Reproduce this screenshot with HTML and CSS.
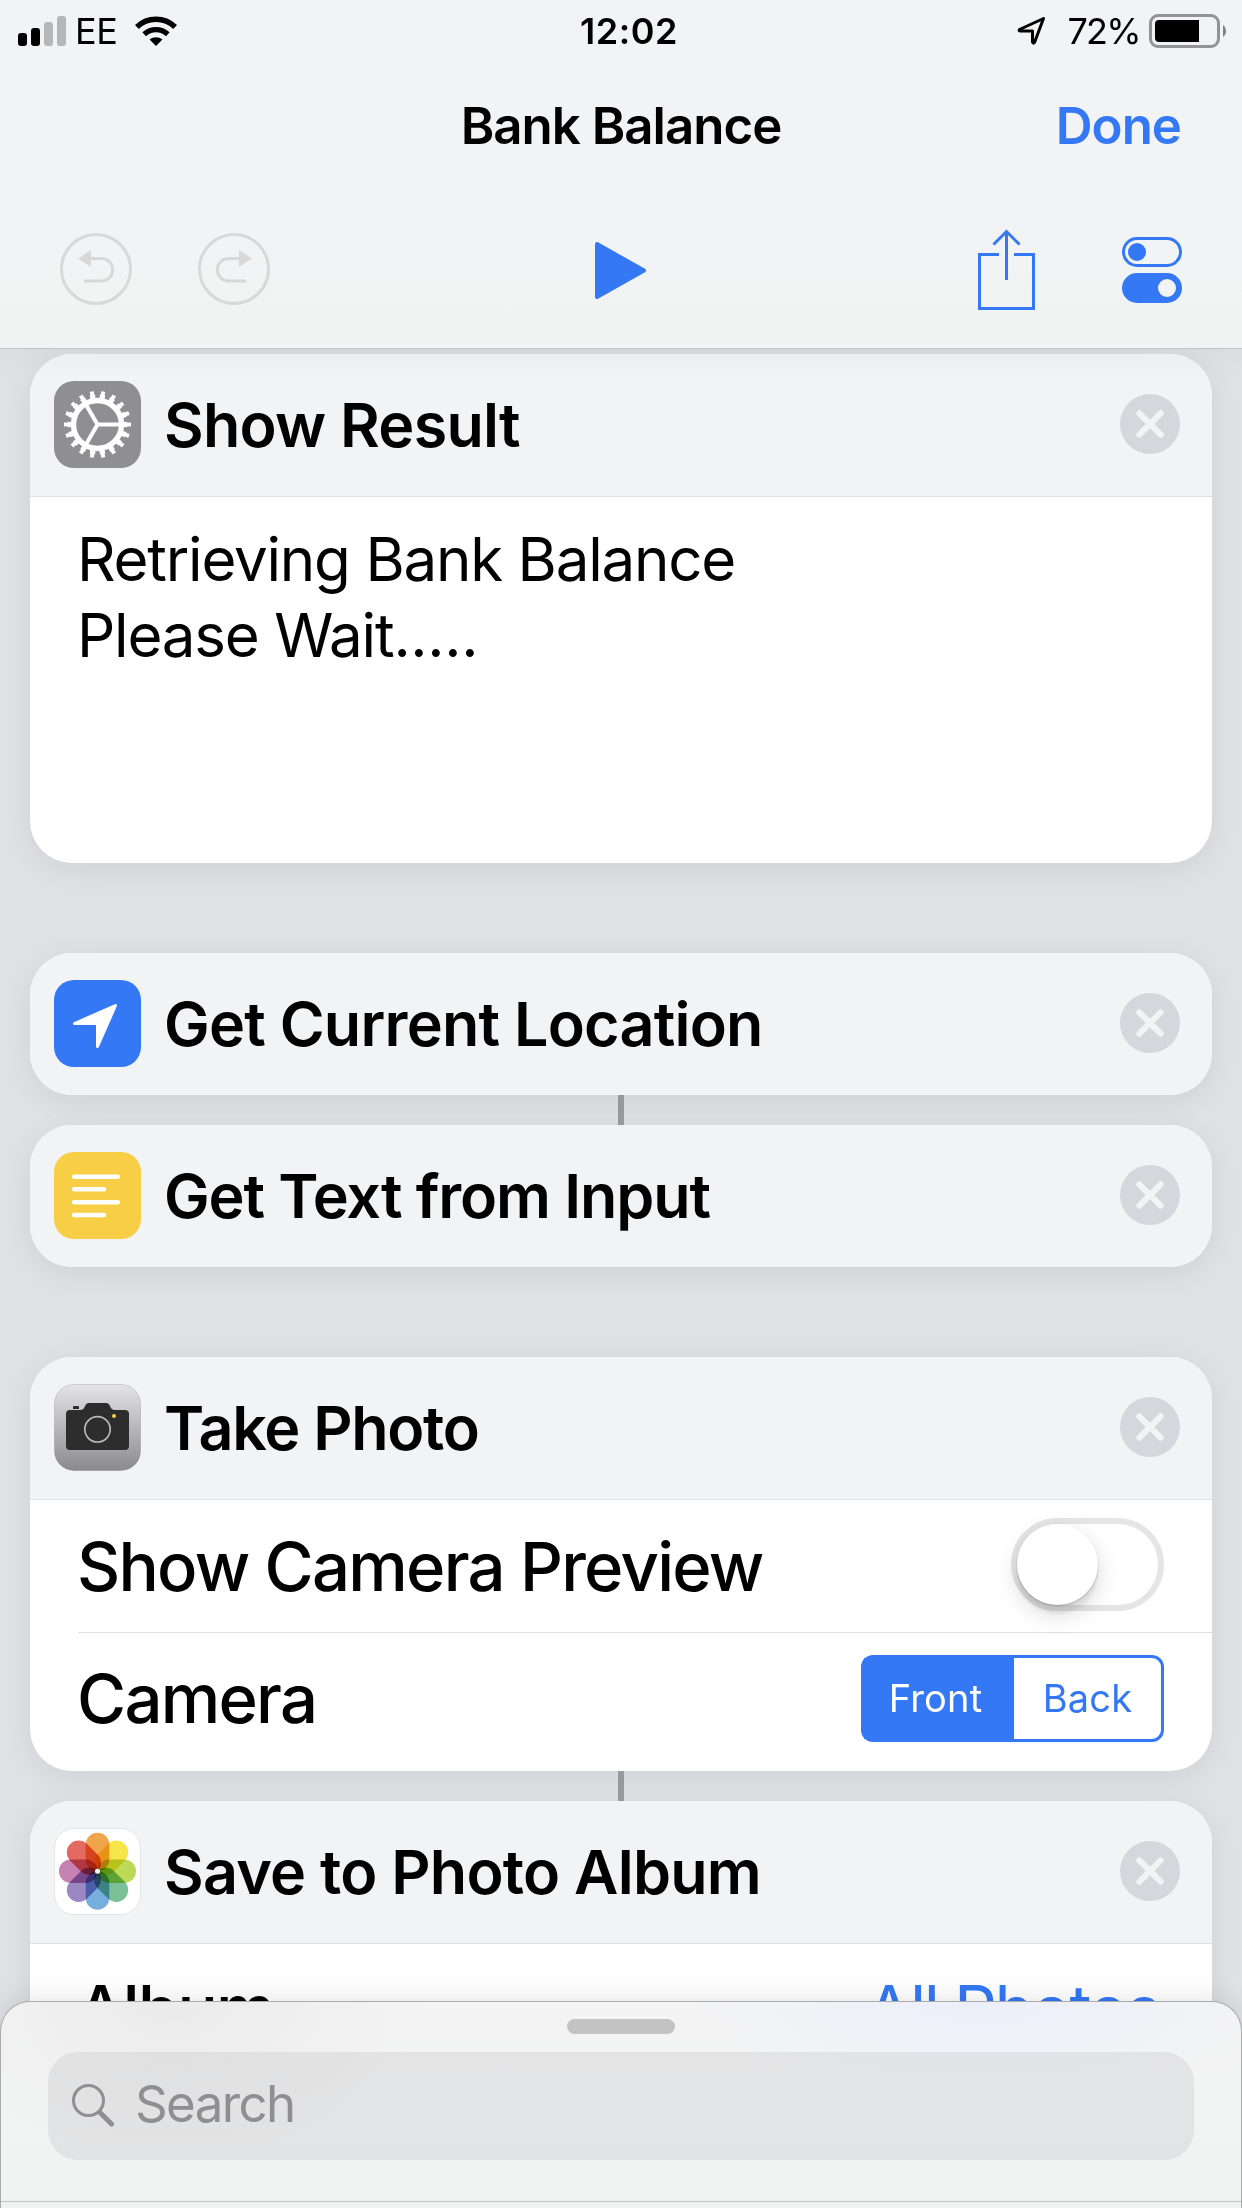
FILE: index.html
```
<!DOCTYPE html>
<html lang="en">
<head>
    <meta charset="UTF-8">
    <meta name="viewport" content="width=device-width, initial-scale=1.0">
    <title>Bank Balance</title>
    <link rel="stylesheet" href="styles.css">
</head>
<body>
    <header class="navbar">
        <div class="status-bar">
            <div class="status-left">
                <svg class="signal" width="48" height="30" viewBox="0 0 48 30">
                    <rect x="0" y="17" width="9" height="13" rx="3"/>
                    <rect x="13" y="12" width="9" height="18" rx="3"/>
                    <rect x="26" y="6" width="9" height="24" rx="3" fill="#b5b6b8"/>
                    <rect x="39" y="0" width="9" height="30" rx="3" fill="#b5b6b8"/>
                </svg>
                <span class="carrier">EE</span>
                <svg class="wifi" width="42" height="30" viewBox="0 0 42 30">
                    <path d="M21 30l-6.4-6.4a9.8 9.8 0 0 1 12.8 0z"/>
                    <path d="M9.2 18.2a17.5 17.5 0 0 1 23.6 0" fill="none" stroke="#000" stroke-width="5.4"/>
                    <path d="M1.9 11a27.5 27.5 0 0 1 38.2 0" fill="none" stroke="#000" stroke-width="5.4"/>
                </svg>
            </div>
            <span class="time">12:02</span>
            <div class="status-right">
                <svg class="arrow" width="30" height="30" viewBox="0 0 30 30">
                    <path d="M26.5 2.5L2.5 13.5Q1.5 15 3 15H15.5V26Q16 28 17.5 26.5Z" fill="none" stroke="#000" stroke-width="3" stroke-linejoin="round"/>
                </svg>
                <span class="percent">72%</span>
                <svg class="battery" width="78" height="34" viewBox="0 0 78 34">
                    <rect x="1.5" y="1.5" width="68" height="31" rx="7.5" fill="none" stroke="#929395" stroke-width="3"/>
                    <path d="M10 6h40v22H10a4 4 0 0 1-4-4V10a4 4 0 0 1 4-4z"/>
                    <path d="M74 11a7.5 7.5 0 0 1 0 12z" fill="#808183"/>
                </svg>
            </div>
        </div>
        <div class="title-bar">
            <h1 class="title">Bank Balance</h1>
            <a class="done">Done</a>
        </div>
        <div class="toolbar">
            <div class="history">
                <svg width="72" height="72" viewBox="0 0 72 72">
                    <circle cx="36" cy="36" r="34.5" fill="none" stroke="#d8d8d8" stroke-width="3"/>
                    <path d="M18 25.5L31 17v17z" fill="#d8d8d8"/>
                    <path d="M30 25.5h11.5a11.25 11.25 0 0 1 0 22.5H24" fill="none" stroke="#d8d8d8" stroke-width="3"/>
                </svg>
                <svg width="72" height="72" viewBox="0 0 72 72">
                    <circle cx="36" cy="36" r="34.5" fill="none" stroke="#d8d8d8" stroke-width="3"/>
                    <path d="M54 25.5L41 17v17z" fill="#d8d8d8"/>
                    <path d="M42 25.5H30.5a11.25 11.25 0 0 0 0 22.5H48" fill="none" stroke="#d8d8d8" stroke-width="3"/>
                </svg>
            </div>
            <svg class="play" width="51" height="57" viewBox="0 0 51 57">
                <path d="M2 2L49 28.5L2 55z" fill="#3478f6" stroke="#3478f6" stroke-width="4" stroke-linejoin="round"/>
            </svg>
            <div class="tools">
                <svg class="share" width="57" height="81" viewBox="0 0 57 81">
                    <path d="M21 25.5H1.5v54h54v-54H36M28.5 51V2M15.5 15.5l13-13 13 13" fill="none" stroke="#3478f6" stroke-width="3"/>
                </svg>
                <svg width="60" height="66" viewBox="0 0 60 66">
                    <rect x="1.5" y="1.5" width="57" height="27" rx="13.5" fill="none" stroke="#3478f6" stroke-width="3"/>
                    <circle cx="15" cy="15" r="9" fill="#3478f6"/>
                    <rect y="36" width="60" height="30" rx="15" fill="#3478f6"/>
                    <circle cx="45" cy="51" r="9" fill="#f2f3f4"/>
                </svg>
            </div>
        </div>
    </header>

    <!-- the X in each card header -->
    <svg class="defs" width="0" height="0">
        <symbol id="close" viewBox="0 0 60 60">
            <circle cx="30" cy="30" r="30" fill="#d4d7dc"/>
            <path d="M19.3 19.3l21.4 21.4M40.7 19.3L19.3 40.7" stroke="#f2f3f5" stroke-width="6" stroke-linecap="round"/>
        </symbol>
    </svg>

    <main class="workflow">
        <section class="card">
            <div class="card-header">
                <svg class="icon" viewBox="0 0 87 87">
                    <rect width="87" height="87" rx="20" fill="#8e8e93"/>
                    <g fill="none" stroke="#fff">
                        <circle cx="43.5" cy="43.5" r="24" stroke-width="5.4"/>
                        <circle cx="43.5" cy="43.5" r="28" stroke-width="4" pathLength="180" stroke-dasharray="5.4 4.6" stroke-dashoffset="2.7"/>
                        <circle cx="43.5" cy="43.5" r="31.5" stroke-width="4" pathLength="180" stroke-dasharray="3.6 6.4" stroke-dashoffset="1.8"/>
                        <path d="M43.5 43.5H66M43.5 43.5L32.5 24.4M43.5 43.5L32.5 62.6" stroke-width="4"/>
                    </g>
                </svg>
                <h2>Show Result</h2>
                <svg class="close"><use href="#close"/></svg>
            </div>
            <div class="card-text">Retrieving Bank Balance<br>Please Wait<span class="dots">.....</span></div>
        </section>

        <section class="card spaced">
            <div class="card-header">
                <svg class="icon" viewBox="0 0 87 87">
                    <rect width="87" height="87" rx="20" fill="#3478f6"/>
                    <path d="M61.5 25.5L20.5 43.5H43.5V66.5z" fill="#fff" stroke="#fff" stroke-width="3" stroke-linejoin="round"/>
                </svg>
                <h2>Get Current Location</h2>
                <svg class="close"><use href="#close"/></svg>
            </div>
        </section>

        <div class="connector"></div>

        <section class="card">
            <div class="card-header">
                <svg class="icon" viewBox="0 0 87 87">
                    <rect width="87" height="87" rx="20" fill="#f7ce46"/>
                    <path d="M20.2 24.7H63.8M20.2 37.3H50M20.2 50.3H63.8M20.2 63H50" stroke="#fff" stroke-width="4.6" stroke-linecap="round"/>
                </svg>
                <h2 class="get-text">Get Text from Input</h2>
                <svg class="close"><use href="#close"/></svg>
            </div>
        </section>

        <section class="card spaced">
            <div class="card-header">
                <svg class="icon" viewBox="0 0 87 87">
                    <defs>
                        <linearGradient id="metal" x1="0" y1="0" x2="0" y2="1">
                            <stop offset="0" stop-color="#e4e3e8"/>
                            <stop offset="1" stop-color="#8b8a8e"/>
                        </linearGradient>
                    </defs>
                    <rect x=".5" y=".5" width="86" height="86" rx="19.5" fill="url(#metal)" stroke="#000" stroke-opacity=".13"/>
                    <path d="M16 26h10c3 0 4-1.5 5-4 .8-2 2-3 4-3h17c2 0 3.2 1 4 3 1 2.5 2 4 5 4h10a4 4 0 0 1 4 4v32a4 4 0 0 1-4 4H16a4 4 0 0 1-4-4V30a4 4 0 0 1 4-4z" fill="#2d2d2d"/>
                    <path d="M19 25v-2q0-1 1-1h4q1 0 1 1v2z" fill="#2d2d2d"/>
                    <circle cx="43.5" cy="45.3" r="12.7" fill="none" stroke="#b9b8bd" stroke-width="1.7"/>
                    <circle cx="60" cy="32" r="2" fill="#f7ce46"/>
                </svg>
                <h2 class="take-photo">Take Photo</h2>
                <svg class="close"><use href="#close"/></svg>
            </div>
            <div class="row">
                <span class="label">Show Camera Preview</span>
                <div class="switch"><div class="knob"></div></div>
            </div>
            <div class="row last">
                <span class="label">Camera</span>
                <div class="segmented">
                    <span class="segment selected">Front</span>
                    <span class="segment">Back</span>
                </div>
            </div>
        </section>

        <div class="connector"></div>

        <section class="card">
            <div class="card-header">
                <svg class="icon" viewBox="0 0 87 87">
                    <defs>
                        <rect id="petal" x="-11.8" y="-38.5" width="23.6" height="38.5" rx="11.8"/>
                    </defs>
                    <rect x=".5" y=".5" width="86" height="86" rx="19.5" fill="#fff" stroke="#e4e5e7"/>
                    <g class="petals" transform="translate(43.5 43.2)">
                        <use href="#petal" fill="#f0a44c"/>
                        <use href="#petal" fill="#f8e54a" transform="rotate(45)"/>
                        <use href="#petal" fill="#bcd957" transform="rotate(90)"/>
                        <use href="#petal" fill="#7cc09a" transform="rotate(135)"/>
                        <use href="#petal" fill="#78aede" transform="rotate(180)"/>
                        <use href="#petal" fill="#9b88c2" transform="rotate(225)"/>
                        <use href="#petal" fill="#c682b2" transform="rotate(270)"/>
                        <use href="#petal" fill="#e36a60" transform="rotate(315)"/>
                    </g>
                    <circle cx="43.5" cy="43.2" r="2.5" fill="#fff"/>
                </svg>
                <h2>Save to Photo Album</h2>
                <svg class="close"><use href="#close"/></svg>
            </div>
            <div class="row last">
                <span class="label">Album</span>
                <span class="value">All Photos</span>
            </div>
        </section>
    </main>

    <div class="sheet">
        <div class="grabber"></div>
        <div class="search">
            <svg width="43" height="43" viewBox="0 0 43 43">
                <circle cx="16.5" cy="16.5" r="15" fill="none" stroke="#8e8e93" stroke-width="3"/>
                <path d="M28 28.5L39.5 40" stroke="#8e8e93" stroke-width="5" stroke-linecap="round"/>
            </svg>
            <span>Search</span>
        </div>
        <div class="sheet-line"></div>
    </div>
</body>
</html>
```
FILE: styles.css
```
* {
    box-sizing: border-box;
}

body {
    margin: 0;
    position: relative;
    width: 1242px;
    height: 2208px;
    overflow: hidden;
    background-color: #e0e1e5;
    font-family: Inter, "Liberation Sans", sans-serif;
    color: #000;
}

svg {
    display: block;
    flex: none;
}

h1, h2 {
    margin: 0;
    font-weight: 600;
}

.defs {
    position: absolute;
}

/* Nav bar */
.navbar {
    position: relative;
    z-index: 1;
    height: 349px;
    background-color: #f2f3f5;
    background-image: linear-gradient(#f2f3f5 60%, #f1f3f2);
    border-bottom: 1px solid #c3c4c7;
    box-shadow: 0 0 36px rgba(0, 0, 0, 0.05);
}

.status-bar {
    display: grid;
    grid-template-columns: 1fr auto 1fr;
    align-items: center;
    height: 60px;
    padding: 1px 15px 0 18px;
    font-size: 36px;
    line-height: 44px;
}

.status-left, .status-right {
    display: flex;
    align-items: center;
}

.status-right {
    justify-content: flex-end;
}

.carrier {
    margin: 0 18px 0 9px;
    letter-spacing: -0.5px;
}

.time {
    margin-left: 13px;
    font-weight: 600;
    letter-spacing: 0.5px;
}

.percent {
    margin: 0 9px 0 20px;
    letter-spacing: -1.7px;
}

.title-bar {
    display: grid;
    grid-template-columns: 1fr auto 1fr;
    align-items: center;
    height: 132px;
    padding: 0 61px 1px;
    font-size: 51px;
    letter-spacing: -1px;
}

.title {
    grid-column: 2;
    font-size: 51px;
}

.done {
    justify-self: end;
    font-weight: 600;
    color: #3478f6;
}

.toolbar {
    display: grid;
    grid-template-columns: 1fr auto 1fr;
    align-items: center;
    height: 156px;
    padding: 0 60px;
}

.history {
    display: flex;
    gap: 66px;
    margin-bottom: 2px;
}

.play {
    margin-right: 2px;
}

.tools {
    display: flex;
    align-items: center;
    justify-content: flex-end;
    gap: 87px;
}

.share {
    margin-bottom: 2px;
}

/* Action cards */
.workflow {
    display: flex;
    flex-direction: column;
    padding: 5px 30px 0;
}

.card {
    flex: none;
    overflow: hidden;
    background-color: #fff;
    border-radius: 42px;
    box-shadow: 0 6px 30px rgba(0, 0, 0, 0.07);
}

.spaced {
    margin-top: 90px;
}

.connector {
    flex: none;
    align-self: center;
    position: relative;
    z-index: 1;
    width: 6px;
    height: 30px;
    background-color: #98989f;
}

.card-header {
    display: flex;
    align-items: center;
    height: 142px;
    padding: 0 32px 0 24px;
    background-color: #f2f3f5;
}

.card-header h2 {
    flex: 1;
    margin-left: 23px;
    font-size: 61px;
    letter-spacing: -0.75px;
    white-space: nowrap;
}

.card-header .get-text {
    letter-spacing: -1.1px;
}

.card-header .take-photo {
    letter-spacing: -1.3px;
}

.icon {
    width: 87px;
    height: 87px;
    margin-bottom: 1px;
}

.close {
    width: 60px;
    height: 60px;
    margin-bottom: 2px;
}

.petals use {
    mix-blend-mode: multiply;
}

.card-text {
    height: 367px;
    padding: 24px 47px;
    border-top: 1px solid #dfe0e2;
    font-size: 60px;
    line-height: 76px;
    letter-spacing: -1.2px;
}

.dots {
    letter-spacing: -0.3px;
}

.row {
    display: flex;
    align-items: center;
    justify-content: space-between;
    height: 133px;
    margin-left: 48px;
    padding-right: 48px;
    border-top: 1px solid #dfe0e2;
}

/* the first divider of a card runs edge to edge */
.card-header + .row {
    margin-left: 0;
    padding-left: 48px;
}

.row.last {
    height: 139px;
    padding-bottom: 7px;
}

.label {
    margin-left: -1px;
    font-size: 67px;
    font-weight: 500;
    letter-spacing: -1.75px;
}

.value {
    margin-right: 5px;
    font-size: 67px;
    letter-spacing: -2.4px;
    color: #3478f6;
}

.switch {
    width: 153px;
    height: 93px;
    margin-bottom: 3px;
    border: 6px solid #e5e5e5;
    border-radius: 47px;
}

.knob {
    width: 81px;
    height: 81px;
    border-radius: 50%;
    background-color: #fff;
    box-shadow: 0 9px 24px rgba(0, 0, 0, 0.15), 0 9px 3px rgba(0, 0, 0, 0.06), 0 1px 2px rgba(0, 0, 0, 0.2);
}

.segmented {
    display: flex;
    width: 303px;
    height: 87px;
    border: 3px solid #3478f6;
    border-radius: 12px;
    font-size: 38px;
    line-height: 81px;
    letter-spacing: 0.2px;
    text-align: center;
    color: #3478f6;
}

.segment {
    flex: 1;
}

.selected {
    flex: none;
    width: 150px;
    padding-right: 7px;
    background-color: #3478f6;
    color: #fff;
}

/* Search drawer over the bottom of the list */
.sheet {
    position: absolute;
    z-index: 2;
    left: 0;
    right: 0;
    bottom: 0;
    height: 207px;
    padding: 17px 47px 0;
    border: 1px solid #a9aaac;
    border-bottom: none;
    border-radius: 30px 30px 0 0;
    background: radial-gradient(ellipse 300px 90px at 980px 0, #eceffa, rgba(240, 242, 243, 0)),
        radial-gradient(ellipse 260px 150px at 170px 0, #ebebeb, rgba(240, 242, 243, 0)),
        linear-gradient(#f4f4f4, #f1f2f2 80%);
    box-shadow: 0 0 30px rgba(0, 0, 0, 0.12);
}

.grabber {
    width: 108px;
    height: 15px;
    margin: 0 auto 18px;
    border-radius: 8px;
    background-color: #c3c3c3;
}

.search {
    display: flex;
    align-items: center;
    gap: 20px;
    height: 108px;
    padding-left: 24px;
    border-radius: 30px;
    background-color: rgba(130, 130, 142, 0.13);
    font-size: 51px;
    letter-spacing: -1.6px;
    color: #8e8e93;
}

.search svg {
    margin-bottom: 1px;
}

.search span {
    padding-bottom: 5px;
}

.sheet-line {
    height: 1px;
    margin: 41px -47px 0;
    background-color: #c3c4c6;
}
```
